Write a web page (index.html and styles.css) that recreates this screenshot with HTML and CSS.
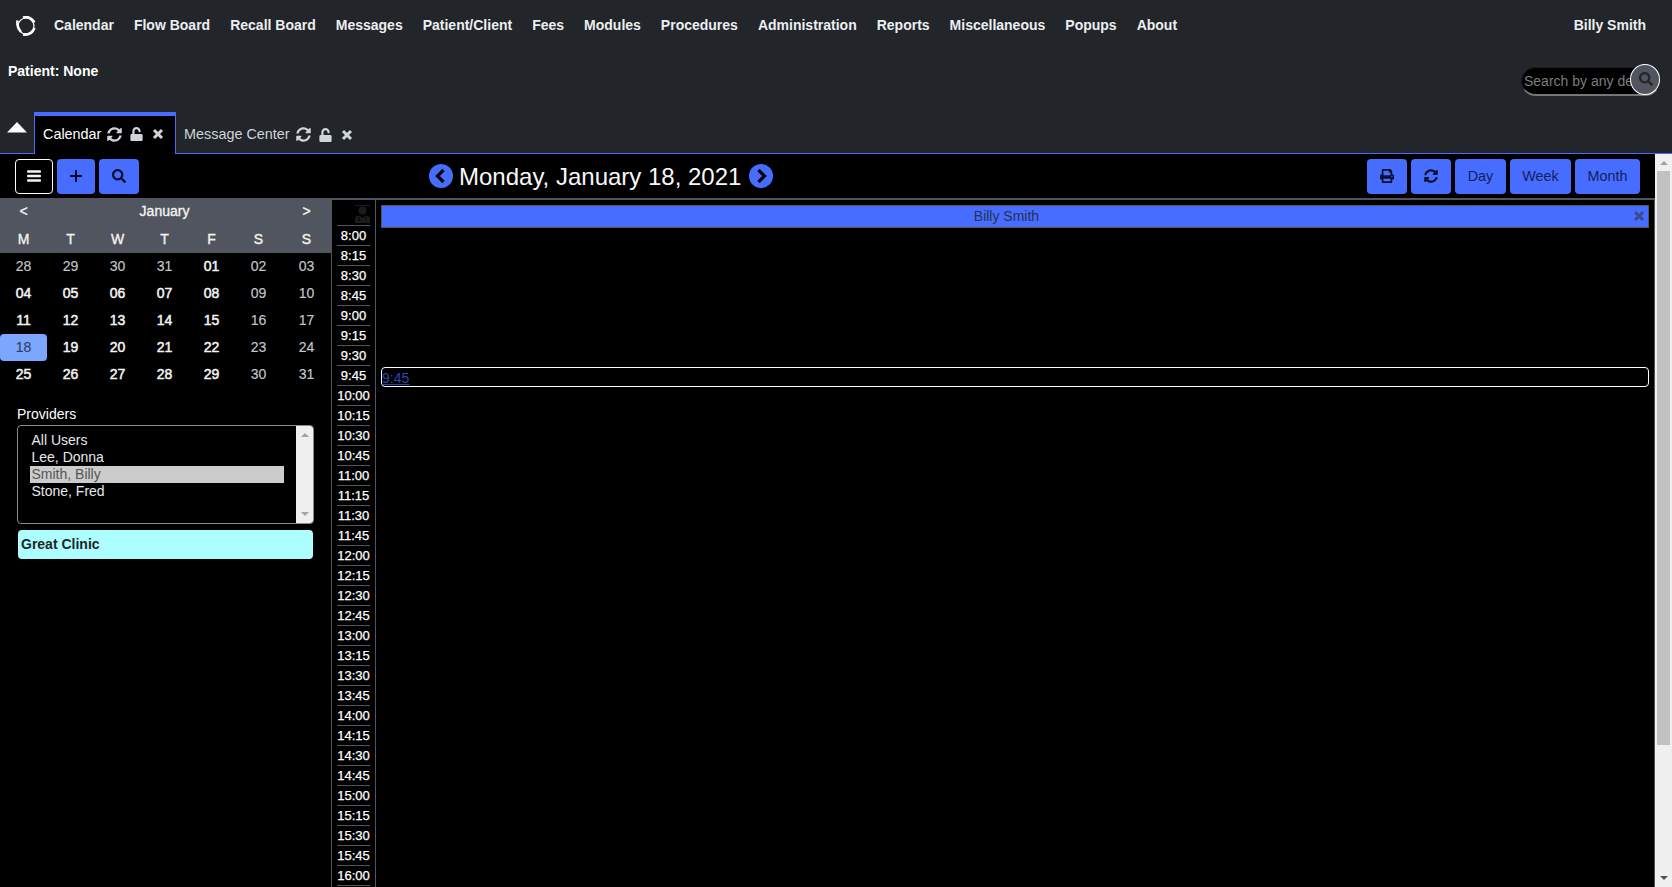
FILE: index.html
```html
<!DOCTYPE html>
<html lang="en">
<head>
<meta charset="utf-8">
<title>Calendar</title>
<link rel="stylesheet" href="styles.css">
</head>
<body>
<svg width="0" height="0" class="defs">
  <symbol id="sync" viewBox="0 0 512 512"><path d="M370.72 133.28C339.458 104.008 298.888 87.962 255.848 88c-77.458.068-144.328 53.178-162.791 126.85-1.344 5.363-6.122 9.15-11.651 9.15H24.103c-7.498 0-13.194-6.807-11.807-14.176C33.933 94.924 134.813 8 256 8c66.448 0 126.791 26.136 171.315 68.685L463.03 40.97C478.149 25.851 504 36.559 504 57.941V192c0 13.255-10.745 24-24 24H345.941c-21.382 0-32.09-25.851-16.971-40.971l41.75-41.749zM32 296h134.059c21.382 0 32.09 25.851 16.971 40.971l-41.75 41.75c31.262 29.273 71.835 45.319 114.876 45.28 77.418-.07 144.315-53.144 162.787-126.849 1.344-5.363 6.122-9.15 11.651-9.15h57.304c7.498 0 13.194 6.807 11.807 14.176C478.067 417.076 377.187 504 256 504c-66.448 0-126.791-26.136-171.315-68.685L48.97 471.03C33.851 486.149 8 475.441 8 454.059V320c0-13.255 10.745-24 24-24z"/></symbol>
  <symbol id="unlock" viewBox="0 0 448 512"><path d="M400 256H152V152.900c0-39.600 31.700-72.500 71.300-72.900 40-.4 72.700 32.100 72.700 72v16c0 13.300 10.700 24 24 24h32c13.300 0 24-10.700 24-24v-16C376 68 307.500-.3 223.500 0 139.500.3 72 69.500 72 153.500V256H48c-26.500 0-48 21.500-48 48v160c0 26.500 21.500 48 48 48h352c26.500 0 48-21.500 48-48V304c0-26.500-21.500-48-48-48z"/></symbol>
  <symbol id="times" viewBox="0 0 12 12"><path d="M2 2L10 10M10 2L2 10" fill="none" stroke="currentColor" stroke-width="3.1"/></symbol>
  <symbol id="search" viewBox="0 0 512 512"><path d="M505 442.700L405.300 343c-4.500-4.500-10.600-7-17-7H372c27.600-35.300 44-79.700 44-128C416 93.100 322.900 0 208 0S0 93.100 0 208s93.100 208 208 208c48.300 0 92.700-16.400 128-44v16.300c0 6.400 2.500 12.500 7 17l99.700 99.700c9.400 9.400 24.600 9.400 33.900 0l28.300-28.300c9.400-9.400 9.400-24.600.1-34zM208 336c-70.700 0-128-57.200-128-128 0-70.700 57.200-128 128-128 70.700 0 128 57.200 128 128 0 70.700-57.200 128-128 128z"/></symbol>
  <symbol id="print" viewBox="0 0 512 512"><path d="M448 192V77.250c0-8.490-3.370-16.620-9.370-22.630L393.370 9.370c-6-6-14.140-9.370-22.630-9.370H96C78.330 0 64 14.330 64 32v160c-35.350 0-64 28.650-64 64v112c0 8.840 7.160 16 16 16h48v96c0 17.670 14.330 32 32 32h320c17.670 0 32-14.330 32-32v-96h48c8.840 0 16-7.160 16-16V256c0-35.350-28.650-64-64-64zm-64 256H128v-96h256v96zm0-224H128V64h192v48c0 8.840 7.160 16 16 16h48v96zm48 72c-13.250 0-24-10.750-24-24 0-13.260 10.750-24 24-24s24 10.740 24 24c0 13.250-10.750 24-24 24z"/></symbol>
  <symbol id="chev-left" viewBox="0 0 24 24"><circle cx="12" cy="12" r="12"/><path d="M14.500 6L8.500 12L14.500 18" fill="none" stroke="#000" stroke-width="3.200"/></symbol>
  <symbol id="chev-right" viewBox="0 0 24 24"><circle cx="12" cy="12" r="12"/><path d="M9.500 6L15.500 12L9.500 18" fill="none" stroke="#000" stroke-width="3.200"/></symbol>
  <symbol id="arrow-up" viewBox="0 0 8 4"><path d="M4 0L8 4H0Z"/></symbol>
  <symbol id="arrow-down" viewBox="0 0 8 4"><path d="M4 4L8 0H0Z"/></symbol>
</svg>

<header class="top">
  <nav class="menu">
    <svg class="logo" viewBox="0 0 20 20" fill="none" stroke="#fff"><circle cx="10" cy="10" r="8" stroke-width="1.200"/><path d="M1.500 4.500Q0.500 11 5 16" stroke-width="2.600"/><path d="M7 1.600Q14 -0.500 18.300 6.500" stroke-width="2.600"/><path d="M18.500 12Q15.500 19.500 7 18.500" stroke-width="2.600"/></svg>
    <span>Calendar</span><span>Flow Board</span><span>Recall Board</span><span>Messages</span><span>Patient/Client</span><span>Fees</span><span>Modules</span><span>Procedures</span><span>Administration</span><span>Reports</span><span>Miscellaneous</span><span>Popups</span><span>About</span>
    <span class="user">Billy Smith</span>
  </nav>
  <div class="patient-row">
    <div class="patient">Patient: None</div>
    <div class="search"><div class="search-input">Search by any de</div><button class="search-btn"><svg width="14" height="14"><use href="#search"/></svg></button></div>
  </div>
  <div class="tabs">
    <div class="tab-lead"><svg width="20" height="11" viewBox="0 0 20 11"><path d="M10 0L20 10.500H0Z" fill="#fff"/></svg></div>
    <div class="tab active"><span>Calendar</span><svg class="i-sync"><use href="#sync"/></svg><svg class="i-lock"><use href="#unlock"/></svg><svg class="i-x"><use href="#times"/></svg></div>
    <div class="tab"><span>Message Center</span><svg class="i-sync"><use href="#sync"/></svg><svg class="i-lock"><use href="#unlock"/></svg><svg class="i-x"><use href="#times"/></svg></div>
    <div class="tab-rest"></div>
  </div>
</header>

<div class="frame">
  <main class="content">
    <div class="toolbar">
      <div class="group left">
        <button class="btn outline"><svg width="14" height="12" viewBox="0 0 14 12" stroke="#f1f1f1" stroke-width="2.400" stroke-linecap="round"><path d="M1 1.500H13M1 6H13M1 10.500H13"/></svg></button>
        <button class="btn plus"><svg width="12" height="12" viewBox="0 0 12 12"><path d="M6 0V12M0 6H12" stroke="#0a0c20" stroke-width="2"/></svg></button>
        <button class="btn find"><svg width="14" height="14"><use href="#search"/></svg></button>
      </div>
      <div class="date"><svg width="24" height="24"><use href="#chev-left"/></svg><span>Monday, January 18, 2021</span><svg width="24" height="24"><use href="#chev-right"/></svg></div>
      <div class="group right">
        <button class="btn print"><svg width="14" height="14"><use href="#print"/></svg></button>
        <button class="btn refresh"><svg width="14" height="14"><use href="#sync"/></svg></button>
        <button class="btn day">Day</button>
        <button class="btn week">Week</button>
        <button class="btn month">Month</button>
      </div>
    </div>
    <div class="panes">
      <aside class="side">
        <div class="mini">
          <div class="mini-head nav"><span>&lt;</span><span class="mname">January</span><span>&gt;</span></div>
          <div class="mini-head"><span>M</span><span>T</span><span>W</span><span>T</span><span>F</span><span>S</span><span>S</span></div>
          <div class="mini-week"><i>28</i><i>29</i><i>30</i><i>31</i><b>01</b><i>02</i><i>03</i></div>
          <div class="mini-week"><b>04</b><b>05</b><b>06</b><b>07</b><b>08</b><i>09</i><i>10</i></div>
          <div class="mini-week"><b>11</b><b>12</b><b>13</b><b>14</b><b>15</b><i>16</i><i>17</i></div>
          <div class="mini-week"><i class="today">18</i><b>19</b><b>20</b><b>21</b><b>22</b><i>23</i><i>24</i></div>
          <div class="mini-week"><b>25</b><b>26</b><b>27</b><b>28</b><b>29</b><i>30</i><i>31</i></div>
        </div>
        <div class="filters">
          <div class="label">Providers</div>
          <div class="list">
            <div class="options"><div>All Users</div><div>Lee, Donna</div><div class="sel">Smith, Billy</div><div>Stone, Fred</div></div>
            <div class="list-scroll"><svg width="8" height="4"><use href="#arrow-up"/></svg><svg width="8" height="4"><use href="#arrow-down"/></svg></div>
          </div>
          <div class="clinic">Great Clinic</div>
        </div>
      </aside>
      <div class="times">
        <div class="corner"><svg width="15" height="18" viewBox="0 0 15 18"><path d="M0 0H15V1H0Z" /><circle cx="7.500" cy="5.500" r="4"/><path d="M0 18V14Q0 11 4 10.500L7.500 13L11 10.500Q15 11 15 14V18Z"/><path d="M4 12V16M11 12V14.500" stroke="#000"/></svg></div>
        <div>8:00</div><div>8:15</div><div>8:30</div><div>8:45</div>
        <div>9:00</div><div>9:15</div><div>9:30</div><div>9:45</div>
        <div>10:00</div><div>10:15</div><div>10:30</div><div>10:45</div>
        <div>11:00</div><div>11:15</div><div>11:30</div><div>11:45</div>
        <div>12:00</div><div>12:15</div><div>12:30</div><div>12:45</div>
        <div>13:00</div><div>13:15</div><div>13:30</div><div>13:45</div>
        <div>14:00</div><div>14:15</div><div>14:30</div><div>14:45</div>
        <div>15:00</div><div>15:15</div><div>15:30</div><div>15:45</div>
        <div>16:00</div><div></div>
      </div>
      <section class="schedule">
        <div class="provider"><span>Billy Smith</span><svg width="12" height="12"><use href="#times"/></svg></div>
        <div class="event"><a>9:45</a></div>
      </section>
    </div>
  </main>
  <div class="scrollbar"><svg class="up" width="8" height="4"><use href="#arrow-up"/></svg><div class="thumb"></div><svg class="down" width="8" height="4"><use href="#arrow-down"/></svg></div>
</div>
</body>
</html>
```

FILE: styles.css
```css
* { box-sizing: border-box; }
html, body { height: 100%; }
body {
  margin: 0;
  overflow: hidden;
  display: flex;
  flex-direction: column;
  background: #000;
  color: #fff;
  font: 14px/17px "Liberation Sans", Arial, sans-serif;
}
svg { display: block; fill: currentColor; flex: none; }
.defs { display: none; }
button { font: inherit; padding: 0; }

.top { height: 154px; background: #22252a; display: flex; flex-direction: column; flex: none; }
.menu { display: flex; align-items: center; height: 50px; padding-left: 16px; color: #eceef0; font-weight: bold; }
.menu span { padding: 0 10px; }
.logo { width: 20px; height: 20px; margin: 2px 8px 0 0; fill: none; }
.menu .user { margin-left: auto; padding-right: 26px; }
.patient-row { display: flex; justify-content: space-between; height: 62px; padding: 13px 12px 0 8px; }
.patient { font-weight: bold; }
.search { display: flex; align-items: flex-start; width: 139px; margin-top: 1px; }
.search-input {
  flex: 1;
  height: 29px;
  margin-top: 3px;
  padding: 5px 0 0 2px;
  margin-right: -30px;
  background: #000;
  color: #7b7b7b;
  border-radius: 15px;
  border: 1px solid #1b1c1e;
  border-bottom: 2px solid #777;
  white-space: nowrap;
}
.search-btn {
  width: 30px; height: 31px;
  display: flex; align-items: center; justify-content: center;
  padding: 0 0 2px 2px;
  border: 1px solid #fff;
  border-radius: 50%;
  background: #50555f;
  color: #22252a;
  position: relative;
}
.tabs { display: flex; height: 42px; color: #ced4da; font-size: 14.400px; }
.tab-lead { width: 34px; padding: 10px 0 0 7px; border-bottom: 1px solid #466dff; }
.tab { display: flex; align-items: center; padding: 4px 0 0 8px; border-bottom: 1px solid #466dff; }
.tab.active { width: 142px; padding: 0 0 2px 8px; background: #000; border: solid #466dff; border-width: 4px 1px 0; }
.tab.active span { color: #fff; }
.tab-rest { flex: 1; border-bottom: 1px solid #466dff; }
.i-sync { width: 15px; height: 15px; margin-left: 6px; }
.i-lock { width: 13px; height: 14px; margin-left: 8px; }
.i-x { width: 12px; height: 12px; margin-left: 9px; }

.frame { flex: 1; display: flex; min-height: 0; }
.content { flex: 1; display: flex; flex-direction: column; min-width: 0; }
.toolbar { display: flex; justify-content: space-between; height: 46px; padding: 5px 15px 0; border-bottom: 2px solid #50555f; flex: none; }
.group { display: flex; gap: 4px; }
.group.left { width: 414px; }
.btn {
  width: 40px; height: 35px;
  display: flex; align-items: center; justify-content: center;
  border: 0; border-radius: 4px;
  background: #466dff; color: #0a1030;
  padding-bottom: 2px;
}
.btn.outline { width: 38px; background: #000; border: 1px solid #fff; }
.btn.plus { width: 38px; }
.btn.day { width: 51px; }
.btn.week { width: 61px; }
.btn.month { width: 65px; }
.btn.day, .btn.week, .btn.month { color: #12215c; font-size: 14.400px; padding-bottom: 1px; }
.date { display: flex; align-items: center; gap: 6px; height: 34px; color: #466dff; margin-right: auto; }
.date span { width: 284px; color: #f8f8f8; font-size: 24px; line-height: 28px; white-space: nowrap; padding-top: 1px; }
.panes { flex: 1; display: flex; min-height: 0; }

.side { width: 331px; margin-top: -2px; flex: none; }
.mini-head, .mini-week { display: grid; grid-template-columns: repeat(6, 47px) 49px; text-align: center; line-height: 27px; height: 27px; }
.mini-head { background: #50555f; color: #f3f3f3; height: 28px; line-height: 28px; -webkit-text-stroke: 0.350px; }
.mini-head.nav { height: 27px; line-height: 26px; }
.mname { grid-column: span 5; }
.mini-week i { font-style: normal; color: #c3c6ca; -webkit-text-stroke: 0.150px; }
.mini-week b { font-weight: normal; color: #f3f3f3; -webkit-text-stroke: 0.500px; }
.mini-week .today { background: #7ba7ff; color: #33415f; border-radius: 4px; }
.filters { padding: 17px 17px 0; }
.label { height: 20px; padding-top: 1px; }
.list { display: flex; height: 99px; border: 1px solid #868c95; border-radius: 4px; overflow: hidden; }
.options { flex: 1; padding: 6px 12px; color: #e6e8ea; }
.options div { padding-left: 1.500px; }
.options .sel { background: #ccc; color: #555; }
.list-scroll { width: 17px; background: #f0f0f0; color: #a3a3a3; display: flex; flex-direction: column; align-items: center; justify-content: space-between; padding: 7px 0; }
.clinic { margin: 6px 1px 0; height: 29px; line-height: 28px; padding-left: 3px; background: #adffff; color: #212529; font-weight: bold; border-radius: 4px; }

.times { width: 45px; flex: none; border: solid #50555f; border-width: 0 1px; padding: 0 5px; font-size: 13px; -webkit-text-stroke: 0.250px; }
.times div { height: 20px; line-height: 19px; border-top: 1px solid #50555f; text-align: center; }
.times .corner { height: 25px; border: 0; padding: 5px 0 0 18px; color: #1c1c1e; -webkit-text-stroke: 0; }
.schedule { flex: 1; padding: 5px 5px 0; border-right: 1px solid #50555f; }
.provider { display: flex; align-items: center; height: 23px; padding-right: 3px; background: #466dff; border: 1px solid #50555f; color: #263250; }
.provider span { flex: 1; text-align: center; padding-right: 2px; }
.provider svg { color: #3b4b8c; margin-top: -1px; }
.event { height: 20px; margin-top: 139px; border: 1px solid #fff; border-radius: 4px; line-height: 20px; }
.event a { color: #2b45b4; text-decoration: underline; }

.scrollbar { width: 17px; background: #f0f0f0; display: flex; flex-direction: column; align-items: center; color: #a3a3a3; }
.scrollbar .up { margin: 7px 0 6px; }
.thumb { width: 13px; height: 574px; background: #c1c1c1; }
.scrollbar .down { margin-top: auto; margin-bottom: 7px; color: #505050; }
```
